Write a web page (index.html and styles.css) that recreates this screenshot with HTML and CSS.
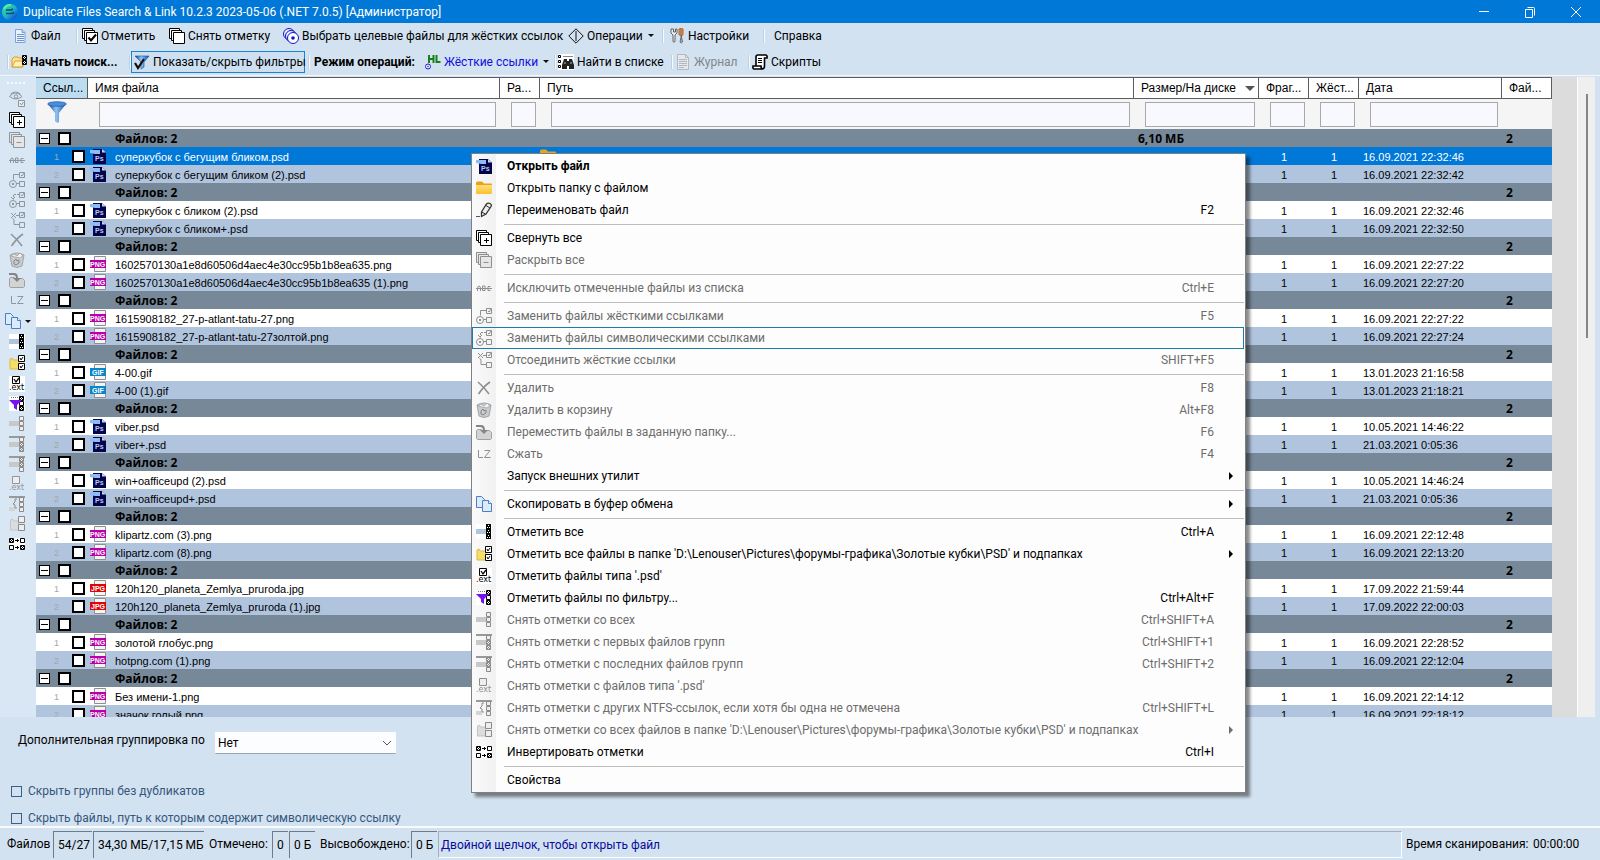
FILE: index.html
```html
<!DOCTYPE html>
<html lang="ru">
<head>
<meta charset="utf-8">
<title>Duplicate Files Search &amp; Link</title>
<link rel="stylesheet" href="styles.css">
</head>
<body>
<svg class="paints" aria-hidden="true">
  <defs>
    <linearGradient id="g-funnel" x1="0" x2="1" y1="0" y2="0"><stop offset="0" stop-color="#123f86"/><stop offset=".45" stop-color="#8fc4f4"/><stop offset="1" stop-color="#12509f"/></linearGradient>
    <linearGradient id="g-folder" x1="0" x2="0" y1="0" y2="1"><stop offset="0" stop-color="#ffdf7c"/><stop offset="1" stop-color="#fbc02d"/></linearGradient>
    <linearGradient id="g-app" x1="0" x2="1" y1="0" y2="1"><stop offset="0" stop-color="#35e08a"/><stop offset=".5" stop-color="#1fb6c8"/><stop offset="1" stop-color="#1428e0"/></linearGradient>
  </defs>
</svg>
<svg class="sprite" aria-hidden="true">
  <symbol id="i-app" viewBox="0 0 16 16"><circle cx="8" cy="8" r="8" fill="url(#g-app)"/><path d="M4 6h5l2-1M4 9.500h6l2-1" stroke="#0a4a6a" stroke-width="1.500" fill="none"/><path d="M2 5a7 7 0 0 1 7-4" stroke="#5cf09a" stroke-width="2" fill="none"/></symbol>
  <symbol id="i-doc" viewBox="0 0 16 16"><path d="M3.500 1.500h6.500l3 3v10h-9.500z" fill="#e8f1fc" stroke="#7ba3da"/><path d="M10 1.500v3h3" fill="#b5cff0" stroke="#7ba3da"/><path d="M5 6.500h7M5 8.500h7M5 10.500h7M5 12.500h7" stroke="#6d97d3"/></symbol>
  <symbol id="i-check" viewBox="0 0 16 16"><g fill="#fff" stroke="currentColor"><path d="M.5 .5h10v10h-10z"/><path d="M2.500 2.500h10v10h-10z"/><path d="M4.500 4.500h11v11h-11z"/></g><path d="M6.500 9.500l2.500 3 5-6" fill="none" stroke="currentColor" stroke-width="2"/></symbol>
  <symbol id="i-uncheck" viewBox="0 0 16 16"><g fill="#fff" stroke="currentColor"><path d="M.5 .5h10v10h-10z"/><path d="M2.500 2.500h10v10h-10z"/><path d="M4.500 4.500h11v11h-11z"/></g></symbol>
  <symbol id="i-plus" viewBox="0 0 16 16"><g fill="#fff" stroke="currentColor"><path d="M.5 .5h10v10h-10z"/><path d="M2.500 2.500h10v10h-10z"/><path d="M4.500 4.500h11v11h-11z"/></g><path d="M8 10.500h5M10.500 8v5" stroke="currentColor"/></symbol>
  <symbol id="i-minus" viewBox="0 0 16 16"><g fill="#e6e6e6" stroke="currentColor"><path d="M.5 .5h10v10h-10z"/><path d="M2.500 2.500h10v10h-10z"/><path d="M4.500 4.500h11v11h-11z"/></g><path d="M7.500 10.500h5" stroke="currentColor"/></symbol>
  <symbol id="i-target" viewBox="0 0 16 16"><g fill="#e8f0fa" stroke="#1414c8"><circle cx="6" cy="6" r="5.500"/><circle cx="8" cy="8" r="5.500"/><circle cx="10" cy="10" r="5.500" fill="#fff"/></g><circle cx="10" cy="10" r="1.800" fill="#1414c8"/></symbol>
  <symbol id="i-ops" viewBox="0 0 16 16"><path d="M8 .8 15.200 8 8 15.200.8 8zM8 3v10" fill="none" stroke="#111"/></symbol>
  <symbol id="i-tools" viewBox="0 0 16 16"><path d="M2 1v4l2 2v6.500q1 1.500 2 0V7l2-2V1L6.500 1v3h-2V1z" fill="#e9edf1" stroke="#444" stroke-width=".8"/><path d="M10 1q3-1.500 4 0v6h-1.500v2l1 5q-1 2-2.500 0l1-5V7H10z" fill="#b9b9b9" stroke="#444" stroke-width=".7"/><path d="M10 .8q2-1 4 0v6h-4z" fill="#d9752c"/></symbol>
  <symbol id="i-search" viewBox="0 0 16 16"><path d="M1 13V5l2-2h4l1 1h4v9z" fill="#ffe08a" stroke="#d9a032"/><path d="M1 13 4 7h9l-2 6z" fill="#fff0b5" stroke="#d9a032"/><path d="M11.500 1.500h4v4h-4zM11.500 6.500h4v4h-4z" fill="#fff" stroke="#000"/><path d="M12 2l3 3M15 2l-3 3M12 7l3 3M15 7l-3 3" stroke="#000"/></symbol>
  <symbol id="i-filtercheck" viewBox="0 0 16 16"><path d="M1 2h14l-5 6v5l-3 2V8z" fill="url(#g-funnel)" stroke="#1b4d92" stroke-width=".6"/><path d="M1 9l3 5 6-9" stroke="#111" stroke-width="2.200" fill="none"/></symbol>
  <symbol id="i-funnel" viewBox="0 0 20 22"><path d="M1 3 8 12v8q2 3 4 1v-9L19 3z" fill="url(#g-funnel)"/><ellipse cx="10" cy="3" rx="9.300" ry="2.300" fill="#4a8fdc" stroke="#1b5aa8" stroke-width=".7"/></symbol>
  <symbol id="i-hl" viewBox="0 0 16 16"><path d="M4 1v8M8.500 1v8M4 5h4.500M11.500 1v7h4" stroke="#188018" stroke-width="2" fill="none"/><circle cx="3" cy="12.500" r="2.500" fill="#fff" stroke="#1414c8"/><circle cx="3" cy="12.500" r=".8" fill="#1414c8"/></symbol>
  <symbol id="i-find" viewBox="0 0 16 16"><path d="M0 0h16v16H0z" fill="#fff"/><path d="M.5 1.500h2v2h-2zM.5 6.500h2v2h-2zM.5 11.500h2v2h-2z" fill="none" stroke="#000"/><path d="M5 2.500h10" stroke="#888"/><path d="M6 5h3v2h2V5h3l2 6v4h-5v-3h-2v3H4v-4z" fill="#222"/><path d="M6 9h2M12 9h2" stroke="#a9bccc"/></symbol>
  <symbol id="i-log" viewBox="0 0 16 16"><path d="M2.500.5h8l3 3v12h-11z" fill="#e4e8ec" stroke="#b3b9bf"/><path d="M10.500.5v3h3M4 5.500h8M4 7.500h8M4 9.500h8M4 11.500h8M4 13.500h5" fill="none" stroke="#b3b9bf"/></symbol>
  <symbol id="i-script" viewBox="0 0 16 16"><path d="M4 12V3q0-2 2-2h8q1.500.5 1 3h-2.500v8q0 3-2.500 3H2q-1.500-.5-1-3h8q0 3 2 3" fill="#fff" stroke="#000" stroke-width="1.600"/><path d="M6 4.500h4M6 6.500h4M6 8.500h4" stroke="#000"/></symbol>
  <symbol id="i-eye" viewBox="0 0 16 16"><path d="M.5 5.500q6-7 12.500 0-6 5-12.500 0M1.500 3q5-4 10 0" fill="none" stroke="#8d979f"/><circle cx="7" cy="5.500" r="1.700" fill="none" stroke="#8d979f"/><path d="M9.500 9.500h6v6h-6z" fill="#e8edf2" stroke="#8d979f"/><path d="M11 12l1.500 2 2-3" fill="none" stroke="#8d979f"/></symbol>
  <symbol id="i-abc" viewBox="0 0 16 16"><path d="M1.500 11V8l1-2h1l1 2v3M6.500 6v4.500h2.500v-4.500zM14.500 6.500h-2.500v4h2.500M0 8.500h16" fill="none" stroke="currentColor"/></symbol>
  <symbol id="i-hard" viewBox="0 0 16 16"><path d="M10.500.5h5v5h-5zM10.500 9.500h5v5h-5zM10 2.500H4.500v5M7.500 11.500H10" fill="none" stroke="currentColor"/><path d="M12 3l1 1 2-3" fill="none" stroke="currentColor"/><circle cx="4" cy="12" r="3.500" fill="none" stroke="currentColor"/><path d="M3 11h2v2h-2z" fill="currentColor"/></symbol>
  <symbol id="i-sym" viewBox="0 0 16 16"><path d="M10.500.5h5v5h-5zM10.500 9.500h5v5h-5zM7.500 11.500H10M2 5l2 2 2-2" fill="none" stroke="currentColor"/><path d="M10 2.500H4.500v5" fill="none" stroke="currentColor" stroke-dasharray="2 1"/><path d="M12 3l1 1 2-3" fill="none" stroke="currentColor"/><circle cx="4" cy="12" r="3.500" fill="none" stroke="currentColor"/><path d="M3 11h2v2h-2z" fill="currentColor"/></symbol>
  <symbol id="i-unlink" viewBox="0 0 16 16"><path d="M10.500.5h5v5h-5zM10.500 10.500h5v5h-5zM3.500 6.500l1.500 1v5h5M2 1l5 5M7 1 2 6M7 3.500h3" fill="none" stroke="currentColor"/><path d="M12 3l1 1 2-3" fill="none" stroke="currentColor"/></symbol>
  <symbol id="i-x" viewBox="0 0 16 16"><path d="M2 2q6 5 11 12M14 2Q8 6 2.500 14" fill="none" stroke="currentColor" stroke-width="1.600"/></symbol>
  <symbol id="i-bin" viewBox="0 0 16 16"><path d="M1 3q7-4 14 0l-2 11q-5 3-10 0z" fill="#c9ccce" stroke="#a2a5a7"/><path d="M2 4l3-2 3 2 3-3 3 3-3 2-5-1z" fill="#eee" stroke="#999" stroke-width=".7"/><path d="M5 9l2-2 1 2 2-1v3l-3 2-2-1z" fill="none" stroke="#858585"/></symbol>
  <symbol id="i-move" viewBox="0 0 16 16"><path d="M.5 6.500l1-1h4l1 1h7l2 2v6l-1 1h-13l-1-1z" fill="#d2d3d4" stroke="#a0a0a0"/><path d="M0 1h5q4 0 4 5h3l-4 4-4-4h3q0-3-3-3H0z" fill="#858585"/></symbol>
  <symbol id="i-lz" viewBox="0 0 16 16"><path d="M2.500 4v7.500H7M8.500 4.500H14L8.500 11.500H14.500" fill="none" stroke="currentColor"/></symbol>
  <symbol id="i-copy" viewBox="0 0 16 16"><path d="M.5.5h5l3 3v8h-8z" fill="#dcebfb" stroke="#4a7fc4"/><path d="M6.500 4.500h6l3 3v8h-9z" fill="#dcebfb" stroke="#4a7fc4"/><path d="M12.500 4.500v3h3" fill="#fff" stroke="#4a7fc4"/></symbol>
  <symbol id="i-all" viewBox="0 0 16 16"><path d="M0 0h16v15H0z" fill="#fff"/><path d="M0 5h10v5H0z" fill="#b0c4de"/><path d="M10 0h5v15h-5z" fill="#000"/><path d="M12 1h1v1h-1zM11 3h1v1h-1zM13 3h1v1h-1zM12 6h1v1h-1zM11 8h1v1h-1zM13 8h1v1h-1zM12 11h1v1h-1zM11 13h1v1h-1zM13 13h1v1h-1z" fill="#fff"/></symbol>
  <symbol id="i-folderall" viewBox="0 0 16 16"><path d="M1 14V4l2-1 1 2h6v9z" fill="#f6dc68" stroke="#d8bb45"/><path d="M9.500.5h6v6h-6zM9.500 8.500h6v6h-6z" fill="#fff" stroke="#000"/><path d="M11 3l1 2 2-3M11 11l1 2 2-3" stroke="#000" fill="none"/></symbol>
  <symbol id="i-ext" viewBox="0 0 16 16"><path d="M0 0h16v16H0z" fill="#fff"/><path d="M3.500.5h7v7h-7z" fill="#fff" stroke="currentColor"/><path d="M5 3l2 3 3-4" fill="none" stroke="currentColor" stroke-width="1.300"/><text x="0" y="14" font-size="8" font-family="DejaVu Sans" fill="currentColor">.ext</text></symbol>
  <symbol id="i-unext" viewBox="0 0 16 16"><path d="M3.500.5h7v7h-7z" fill="#eee" stroke="currentColor"/><text x="0" y="14" font-size="8" font-family="DejaVu Sans" fill="currentColor">.ext</text></symbol>
  <symbol id="i-filter" viewBox="0 0 16 16"><path d="M0 0h16v15H0z" fill="#fff"/><path d="M10.500.5h4v4h-4zM10.500 5.500h4v4h-4zM10.500 10.500h4v4h-4z" fill="#fff" stroke="#000"/><path d="M11 1l3 3M14 1l-3 3M11 11l3 3M14 11l-3 3" stroke="#000"/><path d="M0 4h13L8 9v5l-3-2V9z" fill="#7a10f0"/><path d="M2 1.500h7" stroke="#777" stroke-dasharray="1 1"/></symbol>
  <symbol id="i-none" viewBox="0 0 16 16"><path d="M0 5h10v5H0z" fill="#c6c8ca"/><path d="M10.500.5h4v4h-4zM10.500 5.500h4v4h-4zM10.500 10.500h4v4h-4z" fill="#eee" stroke="#8a8a8a"/></symbol>
  <symbol id="i-first" viewBox="0 0 16 16"><path d="M0 0h16v2H0z" fill="#999"/><path d="M0 6h10v5H0z" fill="#c6c8ca"/><path d="M10.500 1.500h4v4h-4zM10.500 6.500h4v4h-4zM10.500 11.500h4v4h-4z" fill="#eee" stroke="#8a8a8a"/><path d="M11 7l3 3M14 7l-3 3M11 12l3 3M14 12l-3 3" stroke="#8a8a8a"/></symbol>
  <symbol id="i-last" viewBox="0 0 16 16"><path d="M0 0h16v2H0z" fill="#999"/><path d="M0 6h10v5H0z" fill="#c6c8ca"/><path d="M10.500 1.500h4v4h-4zM10.500 6.500h4v4h-4zM10.500 11.500h4v4h-4z" fill="#eee" stroke="#8a8a8a"/><path d="M11 2l3 3M14 2l-3 3M11 7l3 3M14 7l-3 3" stroke="#8a8a8a"/></symbol>
  <symbol id="i-ntfs" viewBox="0 0 16 16"><path d="M0 0h16v2H0z" fill="#999"/><path d="M0 11h6v4H0z" fill="#d2d4d6"/><path d="M8 3H6v3L4 8l2 1v3h2" fill="none" stroke="#8a8a8a"/><path d="M10.500 1.500h4v4h-4zM10.500 6.500h4v4h-4zM10.500 11.500h4v4h-4z" fill="#eee" stroke="#8a8a8a"/></symbol>
  <symbol id="i-unfolder" viewBox="0 0 16 16"><path d="M1.500 14V4l2-1 1 2h5v9z" fill="#dadcde" stroke="#c2c4c6"/><path d="M9.500.5h6v6h-6zM9.500 8.500h6v6h-6z" fill="#eee" stroke="#8a8a8a"/></symbol>
  <symbol id="i-invert" viewBox="0 0 16 16"><path d="M0 2h16v12H0z" fill="#fff"/><path d="M.5 2.500h4v4h-4zM11.500 2.500h4v4h-4zM.5 9.500h4v4h-4zM11.500 9.500h4v4h-4z" fill="none" stroke="#000"/><path d="M1 3l3 3M4 3 1 6M12 10l3 3M15 10l-3 3M6 4.500h4M8.500 3v3M6 11.500h4M8.500 10v3" stroke="#000"/></symbol>
  <symbol id="i-folder" viewBox="0 0 16 16"><path d="M0 3q0-1.500 1.500-1.500H6L8 3.500h7q1 0 1 1V6H0z" fill="#e8a317"/><path d="M0 5h16v8q0 1-1 1H1q-1 0-1-1z" fill="url(#g-folder)"/></symbol>
  <symbol id="i-pen" viewBox="0 0 16 16"><path d="M5.500 10 10.500 2q1.500-1.500 3.500-.5 2 1 1 3L10 12l-4.500 2.500z" fill="#eee" stroke="#333" stroke-width="1.300"/><path d="M10 3.500l4 2.500M5.500 10l4 2" stroke="#333" fill="none"/><path d="M0 14.500h4" stroke="#555"/></symbol>
  <symbol id="i-psd" viewBox="0 0 16 16"><path d="M3 1h9l4 3.500V16H3z" fill="#03044a"/><path d="M12 1l4 3.500h-4z" fill="#c7d6f4"/><path d="M0 2h10v4H5L0 5z" fill="#8fbcf5"/><text x="5" y="13" font-size="7" font-weight="700" font-family="Liberation Sans" fill="#b9c9ff">Ps</text></symbol>
  <symbol id="i-png" viewBox="0 0 16 16"><path d="M4.500.5h11v15h-11z" fill="#f4f4f4" stroke="#8f8f8f"/><path d="M0 4h16v8H0z" fill="#b800a8"/><text x="0" y="10.500" font-size="7" font-weight="700" font-family="Liberation Sans" fill="#fff">PNG</text></symbol>
  <symbol id="i-gif" viewBox="0 0 16 16"><path d="M4.500.5h11v15h-11z" fill="#f4f4f4" stroke="#8f8f8f"/><path d="M0 4h16v8H0z" fill="#0a86c9"/><text x="2" y="10.500" font-size="7" font-weight="700" font-family="Liberation Sans" fill="#fff">GIF</text></symbol>
  <symbol id="i-jpg" viewBox="0 0 16 16"><path d="M4.500.5h11v15h-11z" fill="#f4f4f4" stroke="#8f8f8f"/><path d="M0 4h16v8H0z" fill="#e00505"/><text x="1" y="10.500" font-size="7" font-weight="700" font-family="Liberation Sans" fill="#fff">JPG</text></symbol>
</svg>

<header class="titlebar">
  <svg class="ic"><use href="#i-app"/></svg>
  <h1>Duplicate Files Search &amp; Link 10.2.3 2023-05-06 (.NET 7.0.5) [Администратор]</h1>
  <button class="win" aria-label="Свернуть"><svg viewBox="0 0 12 12"><path d="M1 5.500h10" stroke="#fff"/></svg></button>
  <button class="win" aria-label="Восстановить"><svg viewBox="0 0 12 12"><path d="M1.500 3.500h7v8h-7zM3.500 1.500h6q1 0 1 1v7" fill="none" stroke="#fff"/></svg></button>
  <button class="win" aria-label="Закрыть"><svg viewBox="0 0 12 12"><path d="M1 1l10 10M11 1 1 11" stroke="#fff"/></svg></button>
</header>

<nav class="bar bar-top" aria-label="Главное меню">
  <button class="tool w-file"><svg class="ic"><use href="#i-doc"/></svg>Файл</button>
  <i class="sep"></i>
  <button class="tool w-check"><svg class="ic"><use href="#i-check"/></svg>Отметить</button>
  <button class="tool w-uncheck"><svg class="ic"><use href="#i-uncheck"/></svg>Снять отметку</button>
  <button class="tool w-target"><svg class="ic"><use href="#i-target"/></svg>Выбрать целевые файлы для жёстких ссылок</button>
  <button class="tool w-ops"><svg class="ic"><use href="#i-ops"/></svg>Операции<b class="down"></b></button>
  <i class="sep"></i>
  <button class="tool w-settings"><svg class="ic"><use href="#i-tools"/></svg>Настройки</button>
  <i class="sep"></i>
  <button class="tool w-help">Справка</button>
</nav>
<nav class="bar bar-main" aria-label="Панель инструментов">
  <i class="sep"></i>
  <button class="tool strong w-start"><svg class="ic"><use href="#i-search"/></svg>Начать поиск...</button>
  <i class="sep"></i>
  <button class="tool pressed"><svg class="ic"><use href="#i-filtercheck"/></svg>Показать/скрыть фильтры</button>
  <i class="sep"></i>
  <span class="mode">Режим операций:</span>
  <button class="tool blue w-links"><svg class="ic"><use href="#i-hl"/></svg>Жёсткие ссылки<b class="down"></b></button>
  <i class="sep"></i>
  <button class="tool w-find"><svg class="ic"><use href="#i-find"/></svg>Найти в списке</button>
  <i class="sep"></i>
  <button class="tool w-log" disabled><svg class="ic"><use href="#i-log"/></svg>Журнал</button>
  <i class="sep"></i>
  <button class="tool w-script"><svg class="ic"><use href="#i-script"/></svg>Скрипты</button>
</nav>

<main class="work">
  <div class="strip" id="strip" role="toolbar" aria-label="Действия с файлами"><i class="grip"></i></div>
  <div class="list">
    <table>
      <colgroup><col class="c-link"><col class="c-name"><col class="c-ext"><col><col class="c-size"><col class="c-num"><col class="c-num"><col class="c-date"><col class="c-num"></colgroup>
      <thead>
        <tr class="head"><th class="sorted">Ссыл...</th><th>Имя файла</th><th>Ра...</th><th>Путь</th><th><span class="sortcell">Размер/На диске<b class="down big"></b></span></th><th>Фраг...</th><th>Жёст...</th><th>Дата</th><th>Фай...</th></tr>
        <tr class="filters"><td><svg class="funnel"><use href="#i-funnel"/></svg></td><td><input aria-label="Фильтр: имя файла"></td><td><input aria-label="Фильтр: расширение"></td><td><input aria-label="Фильтр: путь"></td><td><input aria-label="Фильтр: размер"></td><td><input aria-label="Фильтр: фрагменты"></td><td><input aria-label="Фильтр: жёсткие ссылки"></td><td><input aria-label="Фильтр: дата"></td><td></td></tr>
      </thead>
      <tbody id="rows"></tbody>
    </table>
  </div>
  <div class="scroll"><i class="thumb"></i></div>
</main>

<section class="options">
  <div class="grouping">
    <label for="group">Дополнительная группировка по</label>
    <div class="pick">
      <select id="group"><option>Нет</option></select>
      <svg viewBox="0 0 10 6"><path d="M1 1l4 4 4-4" fill="none" stroke="#555"/></svg>
    </div>
  </div>
  <label class="opt"><input type="checkbox">Скрыть группы без дубликатов</label>
  <label class="opt"><input type="checkbox">Скрыть файлы, путь к которым содержит символическую ссылку</label>
</section>

<footer class="status">
  <span class="s-label s-files">Файлов</span><span class="cell s-count">54/27</span><span class="cell s-size">34,30 МБ/17,15 МБ</span>
  <span class="s-label s-marked">Отмечено:</span><span class="cell s-zero">0</span><span class="cell s-zb">0 Б</span>
  <span class="s-label s-freed">Высвобождено:</span><span class="cell s-zb">0 Б</span>
  <span class="hint">Двойной щелчок, чтобы открыть файл</span>
  <span class="s-scan">Время сканирования:</span><span class="s-time">00:00:00</span>
</footer>

<div class="menu" id="menu" role="menu"></div>
<script src="app.js"></script>
</body>
</html>
```

FILE: styles.css
```css
* { box-sizing: border-box; }
body {
  margin: 0;
  min-height: 100vh;
  height: 100vh;
  display: flex;
  flex-direction: column;
  background: #d3e2f0;
  font: 12px/16px Roboto, "Noto Sans", sans-serif;
  color: #000;
  overflow: hidden;
}
button, input, select { font: inherit; color: inherit; }
button { background: none; border: 0; padding: 0; text-align: left; white-space: nowrap; }
.paints { position: absolute; width: 0; height: 0; }
.sprite { display: none; }
.ic { width: 16px; height: 16px; flex: none; display: block; }

.titlebar { height: 23px; flex: none; display: flex; align-items: center; background: #0078d7; color: #fff; padding-left: 2px; }
.titlebar h1 { margin: 0 auto 0 5px; font-size: 12px; font-weight: 400; }
.win { width: 46px; height: 23px; display: grid; place-items: center; padding-right: 3px; }
.win svg { width: 12px; height: 12px; }

.bar { flex: none; display: flex; align-items: center; }
.bar-top { padding-left: 12px; height: 25px; }
.bar-main { height: 28px; padding-left: 7px; border-bottom: 1px solid #f4f8fc; margin-bottom: 1px; }
.tool { display: flex; align-items: center; gap: 3px; height: 21px; flex: none; }
.tool:disabled { color: #7d868e; }
.strong, .mode { font-weight: 700; }
.blue { color: #1010e0; }
.sep { width: 2px; height: 14px; flex: none; background: #f6fafd; border-left: 1px solid #c3cfdb; }
.down { width: 0; height: 0; border: 3px solid transparent; border-top: 3px solid #111; border-bottom: 0; margin-left: 2px; }
.down.big { border-width: 5px 5px 0; border-top-color: #555; margin: 0; }
.w-file { width: 64px; }
.w-check { width: 87px; margin-left: 4px; }
.w-uncheck { width: 114px; }
.w-target { width: 285px; }
.w-ops { width: 94px; }
.w-settings { width: 94px; margin-left: 5px; }
.w-help { margin-left: 9px; }
.w-start { width: 118px; margin-left: 2px; }
.pressed { width: 174px; height: 22px; padding-left: 2px; border: 1px solid #1a84d0; background: #cde0f2; margin-right: 3px; }
.mode { width: 111px; margin-left: 4px; white-space: nowrap; }
.w-links { width: 129px; }
.w-find { width: 113px; margin-left: 2px; }
.w-log { width: 73px; margin-left: 2px; }
.w-script { margin-left: 2px; }

.work { flex: 1; min-height: 0; display: flex; padding-right: 5px; }
.strip { width: 36px; flex: none; background: #d9e6f3; color: #8d959d; display: flex; flex-direction: column; align-items: flex-start; padding: 5px 4px 0 0; }
.strip .grip { width: 18px; border-top: 2px dotted #f8fbfe; margin-left: 7px; height: 6px; flex: none; }
.act { height: 20px; flex: none; width: 32px; padding-left: 9px; display: flex; align-items: center; gap: 2px; }
.act.on { color: #000; }
.act.tall { height: 22px; }
.act.wide { padding-left: 5px; }

.list { flex: 1; min-width: 0; overflow: hidden; padding: 0 25px 0 0; background: #dcdcdc; }
table { width: 100%; table-layout: fixed; border-collapse: separate; border-spacing: 0; font: 11px/18px "Liberation Sans", Arial, sans-serif; }
th, td { padding: 0; text-align: left; white-space: nowrap; overflow: hidden; }
.c-link { width: 52px; }
.c-name { width: 412px; }
.c-ext { width: 40px; }
.c-size { width: 125px; }
.c-num { width: 50px; }
.c-date { width: 143px; }
.head th { height: 22px; background: #fff; border: 1px solid #5c5c5c; border-left: 0; font-weight: 400; font-size: 12px; padding-left: 7px; }
.head th.sorted { background: #bcdcf0; }
.sortcell { display: flex; align-items: center; justify-content: space-between; padding-right: 3px; }
.filters td { height: 30px; background: #f5f5f5; padding: 0 4px 0 11px; }
.filters input { display: block; width: 100%; height: 25px; border: 1px solid #a9a9a9; background: #f7f9fe; padding: 0 3px; }
.funnel { width: 20px; height: 22px; display: block; margin-bottom: 4px; }

.row td { height: 18px; background: #fff; line-height: 16px; }
.row td.text { padding-top: 2px; }
.row.alt td { background: #b0c4de; }
.row.sel td { background: #0078d7; color: #fff; }
.row.group td { background: #778899; font-size: 12px; font-weight: 700; font-family: "Open Sans", "Noto Sans", sans-serif; }
.line { display: flex; align-items: center; height: 18px; }
.line .no { width: 18px; margin-left: 18px; padding-top: 2px; font-size: 9px; color: #a3a7ab; flex: none; }
.line .name { padding-top: 2px; }
.line .toggle { width: 11px; height: 11px; margin: 0 8px 0 3px; background: #fff; border: 1px solid #000; display: grid; place-items: center; flex: none; }
.toggle i { width: 7px; height: 1px; background: #000; }
.line input { appearance: none; width: 13px; height: 13px; margin: 0; border: 2px solid #000; background: #fff; flex: none; }
.line .kind { margin: 0 9px 0 2px; }
.row td.indent { padding-left: 27px; }
.row td.mid { text-align: center; }
.row td.pad { padding-left: 4px; }

.scroll { width: 18px; flex: none; background: #efefef; display: flex; justify-content: center; align-items: flex-start; padding-top: 17px; border-left: 1px solid #fff; }
.thumb { width: 2px; height: 244px; background: #858585; }

.options { flex: none; padding: 15px 11px 0; border-bottom: 2px solid #f8fbfe; display: flex; flex-direction: column; }
.grouping { display: flex; align-items: flex-start; padding-left: 7px; height: 51px; }
.grouping label { width: 197px; }
.pick { display: grid; width: 181px; height: 22px; align-items: center; }
.pick > * { grid-area: 1 / 1; }
.pick select { appearance: none; width: 100%; height: 22px; border: 0; border-bottom: 1px solid #9aa5b0; background: #fcfdfe; padding: 0 3px; border-radius: 1px; }
.pick svg { width: 10px; height: 6px; justify-self: end; margin-right: 4px; pointer-events: none; }
.opt { display: flex; align-items: center; gap: 6px; height: 16px; color: #35577d; }
.opt + .opt { margin-top: 11px; }
.opt input { appearance: none; width: 11px; height: 11px; margin: 0; border: 1px solid #3d5f87; }

.status { flex: none; height: 32px; display: flex; align-items: stretch; padding: 3px 0 2px 7px; line-height: 26px; white-space: nowrap; }
.s-files { width: 46px; }
.s-marked { width: 63px; margin-left: 4px; }
.s-freed { width: 91px; margin-left: 4px; }
.cell { border-left: 1px solid #6f7b86; border-top: 1px solid #6f7b86; padding-left: 4px; margin-right: 1px; }
.s-count { width: 39px; }
.s-size { width: 111px; }
.s-zero { width: 16px; }
.s-zb { width: 26px; }
.hint { flex: 1; border: 1px solid #a3b1be; border-right-color: #fff; border-bottom-color: #fff; padding-left: 2px; color: #0a0a9c; }
.s-scan { width: 131px; padding-left: 4px; }
.s-time { width: 67px; }

.menu { position: absolute; left: 471px; top: 153px; width: 775px; border: 1px solid #808080; padding: 1px 1px 1px 0; background: linear-gradient(90deg, #fafafa 0, #f1f1f1 24px, #fdfdfd 24px); box-shadow: 4px 4px 3px rgba(0, 0, 0, .45); }
.item { width: 100%; height: 22px; display: flex; align-items: center; border: 1px solid transparent; padding: 0 0 0 3px; }
.item:disabled { color: #6d6d6d; }
.item .slot { width: 31px; flex: none; color: #000; }
.item:disabled .slot { color: #8f8f8f; }
.item .keys { margin-left: auto; }
.item .tail { width: 29px; flex: none; display: flex; padding-left: 15px; }
.item .tail b { border: 4px solid transparent; border-left-color: currentColor; border-right: 0; }
.item.first { font-weight: 700; }
.item.hot { border-color: #1a7dab; }
.rule { height: 1px; margin: 3px 0 2px 32px; background: #bdbdbd; }
```

FILE: app.js
```js
const icon = (name, cls = '') => name ? `<svg class="ic ${cls}"><use href="#i-${name}"/></svg>` : '';

const groups = [
  ['psd', 'суперкубок с бегущим бликом.psd', '16.09.2021 22:32:46', 'суперкубок с бегущим бликом (2).psd', '16.09.2021 22:32:42'],
  ['psd', 'суперкубок с бликом (2).psd', '16.09.2021 22:32:46', 'суперкубок с бликом+.psd', '16.09.2021 22:32:50'],
  ['png', '1602570130a1e8d60506d4aec4e30cc95b1b8ea635.png', '16.09.2021 22:27:22', '1602570130a1e8d60506d4aec4e30cc95b1b8ea635 (1).png', '16.09.2021 22:27:20'],
  ['png', '1615908182_27-p-atlant-tatu-27.png', '16.09.2021 22:27:22', '1615908182_27-p-atlant-tatu-27золтой.png', '16.09.2021 22:27:24'],
  ['gif', '4-00.gif', '13.01.2023 21:16:58', '4-00 (1).gif', '13.01.2023 21:18:21'],
  ['psd', 'viber.psd', '10.05.2021 14:46:22', 'viber+.psd', '21.03.2021 0:05:36'],
  ['psd', 'win+oafficeupd (2).psd', '10.05.2021 14:46:24', 'win+oafficeupd+.psd', '21.03.2021 0:05:36'],
  ['png', 'klipartz.com (3).png', '16.09.2021 22:12:48', 'klipartz.com (8).png', '16.09.2021 22:13:20'],
  ['jpg', '120h120_planeta_Zemlya_pruroda.jpg', '17.09.2022 21:59:44', '120h120_planeta_Zemlya_pruroda (1).jpg', '17.09.2022 22:00:03'],
  ['png', 'золотой глобус.png', '16.09.2021 22:28:52', 'hotpng.com (1).png', '16.09.2021 22:12:04'],
  ['png', 'Без имени-1.png', '16.09.2021 22:14:12', 'значок голый.png', '16.09.2021 22:18:12']
];

const fileRow = (cls, no, type, name, date) => `<tr class="row ${cls}">
  <td><div class="line"><span class="no">${no}</span><input type="checkbox" aria-label="${name}"></div></td>
  <td><div class="line">${icon(type, 'kind')}<span class="name">${name}</span></div></td><td></td><td><div class="line">${cls === 'sel' ? icon('folder') : ''}</div></td><td></td>
  <td class="mid text">1</td><td class="mid text">1</td><td class="pad text">${date}</td><td></td></tr>`;

document.getElementById('rows').innerHTML = groups.map((g, i) => `<tr class="row group">
  <td><div class="line"><button class="toggle" aria-label="Свернуть группу"><i></i></button><input type="checkbox" aria-label="Отметить группу"></div></td>
  <td class="indent text">Файлов: 2</td><td></td><td></td><td class="pad text">${i ? '' : '6,10 МБ'}</td><td></td><td></td><td></td><td class="pad text">2</td></tr>`
  + fileRow(i ? '' : 'sel', 1, g[0], g[1], g[2]) + fileRow('alt', 2, g[0], g[3], g[4])).join('');

const folder = "'D:\\Lenouser\\Pictures\\форумы-графика\\Золотые кубки\\PSD' и подпапках";
// flags: d = disabled, s = submenu, h = highlighted, b = default action
const menu = [
  ['psd', 'Открыть файл', '', 'b'], ['folder', 'Открыть папку с файлом'], ['pen', 'Переименовать файл', 'F2'], null,
  ['plus', 'Свернуть все'], ['minus', 'Раскрыть все', '', 'd'], null,
  ['abc', 'Исключить отмеченные файлы из списка', 'Ctrl+E', 'd'], null,
  ['hard', 'Заменить файлы жёсткими ссылками', 'F5', 'd'], ['sym', 'Заменить файлы символическими ссылками', '', 'dh'], ['unlink', 'Отсоединить жёсткие ссылки', 'SHIFT+F5', 'd'], null,
  ['x', 'Удалить', 'F8', 'd'], ['bin', 'Удалить в корзину', 'Alt+F8', 'd'], ['move', 'Переместить файлы в заданную папку...', 'F6', 'd'], ['lz', 'Сжать', 'F4', 'd'], ['', 'Запуск внешних утилит', '', 's'], null,
  ['copy', 'Скопировать в буфер обмена', '', 's'], null,
  ['all', 'Отметить все', 'Ctrl+A'], ['folderall', 'Отметить все файлы в папке ' + folder, '', 's'], ['ext', "Отметить файлы типа '.psd'"], ['filter', 'Отметить файлы по фильтру...', 'Ctrl+Alt+F'],
  ['none', 'Снять отметки со всех', 'Ctrl+SHIFT+A', 'd'], ['first', 'Снять отметки с первых файлов групп', 'Ctrl+SHIFT+1', 'd'], ['last', 'Снять отметки с последних файлов групп', 'Ctrl+SHIFT+2', 'd'],
  ['unext', "Снять отметки с файлов типа '.psd'", '', 'd'], ['ntfs', 'Снять отметки с других NTFS-ссылок, если хотя бы одна не отмечена', 'Ctrl+SHIFT+L', 'd'],
  ['unfolder', 'Снять отметки со всех файлов в папке ' + folder, '', 'ds'], ['invert', 'Инвертировать отметки', 'Ctrl+I'], null,
  ['', 'Свойства']
];
document.getElementById('menu').innerHTML = menu.map((m) => {
  if (!m) return '<div class="rule"></div>';
  const [ic, text, keys = '', f = ''] = m;
  return `<button role="menuitem" class="item${f.includes('b') ? ' first' : ''}${f.includes('h') ? ' hot' : ''}"${f.includes('d') ? ' disabled' : ''}><span class="slot">${icon(ic)}</span><span>${text}</span><span class="keys">${keys}</span><span class="tail">${f.includes('s') ? '<b></b>' : ''}</span></button>`;
}).join('');

const strip = [['eye', 'Просмотр', 'tall'], ['plus', 'Свернуть все', 'on'], ['minus', 'Раскрыть все'], ['abc', 'Исключить'], ['hard', 'Жёсткие ссылки'], ['sym', 'Символические ссылки'], ['unlink', 'Отсоединить'],
  ['x', 'Удалить'], ['bin', 'Удалить в корзину'], ['move', 'Переместить'], ['lz', 'Сжать'], ['copy', 'Скопировать', 'on tall wide'], ['all', 'Отметить все', 'on'], ['folderall', 'Отметить в папке', 'on tall'],
  ['ext', 'Отметить по типу', 'on'], ['filter', 'Отметить по фильтру', 'on'], ['none', 'Снять все'], ['first', 'Снять первые'], ['last', 'Снять последние'], ['unext', 'Снять по типу'], ['ntfs', 'Снять с NTFS-ссылок'], ['unfolder', 'Снять в папке'], ['invert', 'Инвертировать', 'on']];
document.getElementById('strip').insertAdjacentHTML('beforeend', strip.map(([ic, label, cls = '']) =>
  `<button class="act ${cls}" aria-label="${label}">${icon(ic)}${ic === 'copy' ? '<b class="down"></b>' : ''}</button>`).join(''));
```
